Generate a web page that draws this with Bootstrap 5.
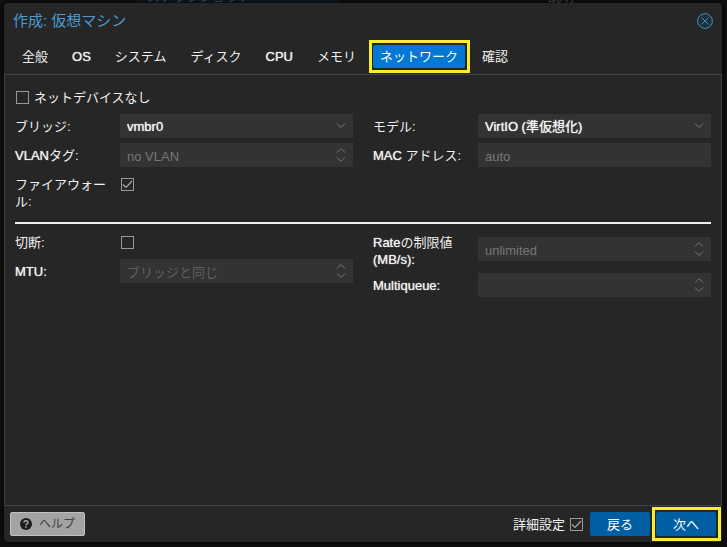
<!DOCTYPE html>
<html lang="ja" data-bs-theme="dark">
<head>
<meta charset="utf-8">
<meta name="viewport" content="width=device-width, initial-scale=1">
<title>作成: 仮想マシン</title>
<link rel="stylesheet" href="https://cdn.jsdelivr.net/npm/bootstrap@5.3.0/dist/css/bootstrap.min.css">
<style>
  body { background: #101010; color: #f0f0f0; font: 400 13px/17px "Liberation Sans", "Noto Sans CJK JP", sans-serif; }
  .backdrop-strip { left: 0; right: 0; top: 0; height: 3px; color: #555; }
  .strip-button { margin-left: 136px; width: 203px; background: #101c26; }
  .strip-button span { display: block; margin: -12px 0 0 11px; }
  .strip-note { margin: -12px 0 0 209px; }
  .page { padding: 3px 5px 5px 4px; min-height: 100vh; }
  .dialog { background: #262626; border-radius: 4px; box-shadow: 0 0 6px #000; }
  .dialog-title { font-size: 15px; line-height: 20px; font-weight: 400; color: #4c9bd0; margin: 0; }
  .dialog-head { padding: 8px 9px 0 9px; height: 37px; }
  .close-button { border: 0; background: none; padding: 0; width: 16px; height: 16px; line-height: 0; margin-top: 2px; }
  .tab-strip { padding: 5px 11px 6px 11px; gap: 10px; }
  .tab-strip .nav-link { padding: 3px 7px; line-height: 17px; color: #f0f0f0; border-radius: 2px; }
  .tab-strip .nav-link.active { background: #0078d4; color: #fff; }
  .marked { position: relative; }
  .marked::after { content: ""; position: absolute; inset: -5px -5px -5px -4px; border: 3px solid #f9ec31; pointer-events: none; }
  .latin { text-shadow: 0 0 1px currentColor; }
  .dialog-body { border: 1px solid #424242; padding: 10px; }
  .columns { display: grid; grid-template-columns: 1fr 1fr; column-gap: 20px; }
  .field { display: grid; grid-template-columns: 105px 1fr; min-height: 24px; margin-bottom: 5px; }
  .field > label { padding: 4px 10px 0 0; }
  .control { height: 24px; min-height: 24px; padding: 2px 30px 0 7px; border: 0; border-radius: 0; background-color: #333; color: #f5f5f5; font-size: 13px; line-height: 22px; }
  .control:focus { background-color: #3a3a3a; box-shadow: none; }
  .control::placeholder { color: #777; opacity: 1; }
  .control.muted-hint::placeholder { color: #606060; }
  select.control { text-shadow: 0 0 1px currentColor; background-image: url("data:image/svg+xml,%3Csvg xmlns='http://www.w3.org/2000/svg' width='10' height='24' fill='none' stroke='%23777'%3E%3Cpath d='M1 9.500l4 4 4-4'/%3E%3C/svg%3E"); background-size: 10px 24px; background-position: right 7px center; background-repeat: no-repeat; }
  .spinner { background-image: url("data:image/svg+xml,%3Csvg xmlns='http://www.w3.org/2000/svg' width='10' height='24' fill='none' stroke='%23777'%3E%3Cpath d='M1 9.500l4-4 4 4M1 14.500l4 4 4-4'/%3E%3C/svg%3E"); background-position: right 7px center; background-repeat: no-repeat; }
  .tick { appearance: none; width: 13px; height: 13px; margin: 0; border: 1px solid #999; background: transparent center no-repeat; flex: none; }
  .tick:checked { background-image: url("data:image/svg+xml,%3Csvg xmlns='http://www.w3.org/2000/svg' width='11' height='11' fill='none' stroke='%23aaa' stroke-width='1.200'%3E%3Cpath d='M1 5.500l3 3 6-6.500'/%3E%3C/svg%3E"); }
  .field .tick { margin: 6px 0 0 1px; }
  .no-device { gap: 5px; padding: 4px 0 0 1px; margin-bottom: 8px; }
  .divider { height: 2px; border: 0; margin: 7px 0 6px; background: #f0f0f0; opacity: 1; }
  .dialog-foot { padding: 6px; gap: 6px; }
  .foot-button { height: 24px; padding: 0; border: 0; border-radius: 2px; font-size: 13px; line-height: 17px; width: 60px; color: #fff; background: #005fa3; }
  .foot-button:hover { background: #0078d4; color: #fff; }
  .help-button { width: 75px; background: #a3a3a3; border: 1px solid #c0c0c0; color: #404040; gap: 7px; font-size: 12px; }
  .advanced { gap: 5px; padding-right: 1px; }
</style>
</head>
<body>
<div class="backdrop-strip position-absolute d-flex overflow-hidden" aria-hidden="true">
  <div class="strip-button"><span>スナップショット</span></div>
  <div class="strip-note">説明</div>
</div>
<main class="page d-flex position-relative">
  <section class="dialog d-flex flex-column flex-grow-1" role="dialog" aria-labelledby="dialog-title">
    <header class="dialog-head d-flex justify-content-between align-items-start">
      <h1 class="dialog-title" id="dialog-title">作成: 仮想マシン</h1>
      <button type="button" class="close-button" aria-label="閉じる">
        <svg width="16" height="16" viewBox="0 0 16 16" fill="none" stroke="#3892c0"><circle cx="8" cy="8" r="7.4" fill="#1f3038"/><path d="M4.500 4.500l7 7M11.500 4.500l-7 7"/></svg>
      </button>
    </header>
    <nav class="tab-strip nav flex-nowrap">
      <a class="nav-link" href="#">全般</a>
      <a class="nav-link latin" href="#">OS</a>
      <a class="nav-link" href="#">システム</a>
      <a class="nav-link" href="#">ディスク</a>
      <a class="nav-link latin" href="#">CPU</a>
      <a class="nav-link" href="#">メモリ</a>
      <a class="nav-link active marked" href="#" aria-current="page">ネットワーク</a>
      <a class="nav-link" href="#">確認</a>
    </nav>
    <form class="dialog-body flex-grow-1" id="network-form">
      <div class="no-device d-flex align-items-center">
        <input class="tick" type="checkbox" id="no-device">
        <label for="no-device">ネットデバイスなし</label>
      </div>
      <div class="columns">
        <div>
          <div class="field"><label for="bridge">ブリッジ:</label><select class="form-select control" id="bridge"><option>vmbr0</option></select></div>
          <div class="field"><label for="vlan"><span class="latin">VLAN</span>タグ:</label><input class="form-control control spinner" id="vlan" placeholder="no VLAN"></div>
          <div class="field"><label for="firewall">ファイアウォール:</label><input class="tick" type="checkbox" id="firewall" checked></div>
        </div>
        <div>
          <div class="field"><label for="model">モデル:</label><select class="form-select control" id="model"><option>VirtIO (準仮想化)</option></select></div>
          <div class="field"><label for="mac"><span class="latin">MAC</span> アドレス:</label><input class="form-control control" id="mac" placeholder="auto"></div>
        </div>
      </div>
      <hr class="divider">
      <div class="columns">
        <div>
          <div class="field"><label for="disconnect">切断:</label><input class="tick" type="checkbox" id="disconnect"></div>
          <div class="field"><label class="latin" for="mtu">MTU:</label><input class="form-control control spinner muted-hint" id="mtu" placeholder="ブリッジと同じ"></div>
        </div>
        <div>
          <div class="field align-items-center"><label for="rate"><span class="latin">Rate</span>の制限値 <span class="latin">(MB/s):</span></label><input class="form-control control spinner" id="rate" placeholder="unlimited"></div>
          <div class="field"><label class="latin" for="queues">Multiqueue:</label><input class="form-control control spinner" id="queues"></div>
        </div>
      </div>
    </form>
    <footer class="dialog-foot d-flex align-items-center">
      <button type="button" class="btn foot-button help-button d-flex align-items-center justify-content-center me-auto">
        <svg width="12" height="12" viewBox="0 0 12 12"><circle cx="6" cy="6" r="6" fill="#1c1c1c"/><path d="M4 4.600C4 2.200 8 2.200 8 4.500 8 6 6 5.900 6 7.300" fill="none" stroke="#a8a8a8" stroke-width="1.500"/><path d="M5.200 8.200h1.600v1.500H5.200z" fill="#a8a8a8"/></svg>
        ヘルプ
      </button>
      <div class="advanced d-flex align-items-center"><label for="advanced">詳細設定</label><input class="tick" type="checkbox" id="advanced" checked></div>
      <button type="button" class="btn foot-button">戻る</button>
      <button type="submit" form="network-form" class="btn foot-button marked">次へ</button>
    </footer>
  </section>
</main>
<script src="https://cdn.jsdelivr.net/npm/bootstrap@5.3.0/dist/js/bootstrap.bundle.min.js"></script>
</body>
</html>
